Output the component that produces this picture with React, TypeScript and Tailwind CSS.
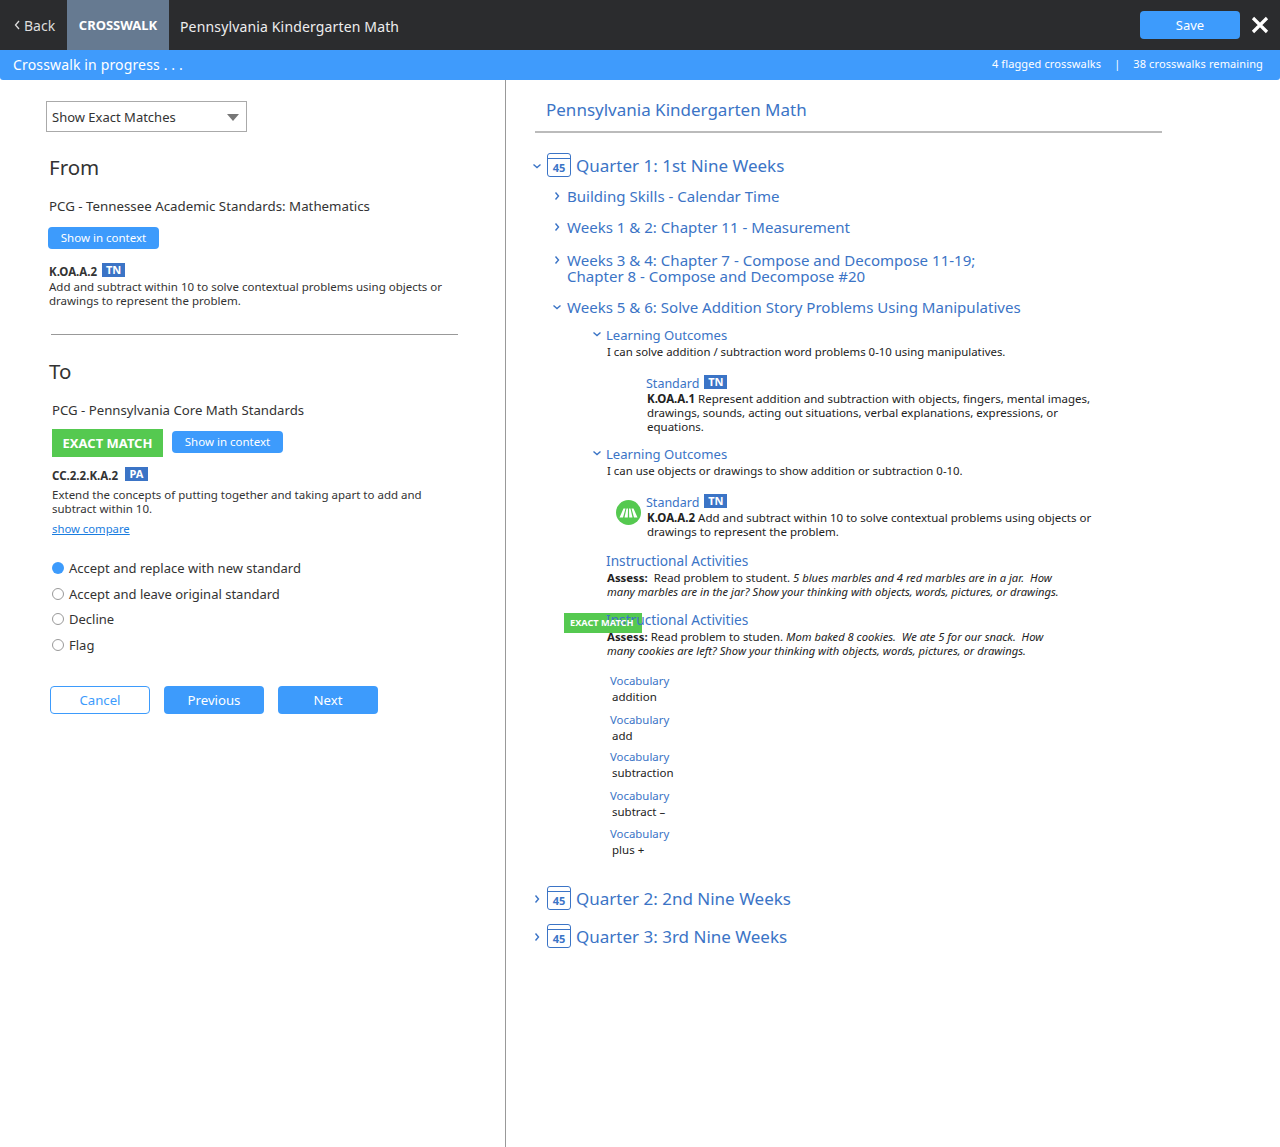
import React from "react";

const font = { fontFamily: '"Noto Sans", sans-serif' };

function Badge({ t, cls = "" }: { t: string; cls?: string }) {
  return (
    <span className={`inline-flex h-[14px] w-[23px] items-center justify-center bg-[#3b74c6] text-[11px] font-bold leading-[14px] text-white ${cls}`}>
      {t}
    </span>
  );
}

function Chevron({ open, cls = "" }: { open?: boolean; cls?: string }) {
  return (
    <svg width="10" height="10" viewBox="0 0 10 10" className={cls} fill="none" stroke="#3b74c6" strokeWidth="1.4">
      {open ? <path d="M1.5 3.5 L5 6.5 L8.5 3.5" /> : <path d="M3.5 1.5 L6.5 5 L3.5 8.5" />}
    </svg>
  );
}

function Cal() {
  return (
    <span className="relative flex h-[24px] w-[24px] shrink-0 items-end justify-center rounded-[3px] border border-[#3b74c6] pb-[1px] text-[11px] font-bold leading-[14px] text-[#3b74c6]">
      <span className="absolute left-0 right-0 top-[4px] h-px bg-[#3b74c6]" />
      45
    </span>
  );
}

function Quarter({ t, open, cls }: { t: string; open?: boolean; cls: string }) {
  return (
    <div className={`flex h-[24px] items-center ${cls}`}>
      <Chevron open={open} cls="ml-[-3px] mr-[5px] mt-[2px]" />
      <Cal />
      <span className="ml-[5px] pt-[2px] text-[17px] leading-[24px] text-[#3b74c6]">{t}</span>
    </div>
  );
}

function Sub({ t, open, cls }: { t: React.ReactNode; open?: boolean; cls: string }) {
  return (
    <div className={`flex items-start pl-[17px] ${cls}`}>
      <Chevron open={open} cls="mt-[3px] mr-[5px] shrink-0" />
      <div className="text-[15.05px] leading-[16px] text-[#3b74c6]">{t}</div>
    </div>
  );
}

function Btn({ t, cls }: { t: string; cls: string }) {
  return <div className={`flex items-center justify-center rounded-[4px] bg-[#3d9bfc] text-white ${cls}`}>{t}</div>;
}

function Radio({ t, on, cls }: { t: string; on?: boolean; cls: string }) {
  return (
    <div className={`flex h-[20px] items-center pl-[52px] text-[13px] text-[#333] ${cls}`}>
      <span className={`mr-[5px] h-[12px] w-[12px] rounded-full ${on ? "bg-[#3d9bfc]" : "border border-[#999] bg-white"}`} />
      <span className="pt-[1px]">{t}</span>
    </div>
  );
}

function Vocab({ t, cls }: { t: string; cls: string }) {
  return (
    <div className={`pl-[75px] ${cls}`}>
      <div className="text-[11.4px] leading-[16px] text-[#3b74c6]">Vocabulary</div>
      <div className="pl-[2px] text-[11.5px] leading-[16px] text-[#222]">{t}</div>
    </div>
  );
}

function Outcome({ t }: { t: string }) {
  return (
    <div className="relative mt-[12px] pl-[57px]">
      <Chevron open cls="absolute left-[57px] top-[2px]" />
      <div className="pl-[14px] text-[13.1px] leading-[16px] text-[#3b74c6]">Learning Outcomes</div>
      <div className="mt-[1px] pl-[15px] text-[11.4px] leading-[16px]">{t}</div>
    </div>
  );
}

export default function App() {
  return (
    <div style={font} className="flex min-h-[1147px] w-[1280px] flex-col bg-white">
      <header className="flex h-[50px] items-center bg-[#2b2c2e] text-white">
        <div className="flex w-[67px] items-center pl-[14px] text-[14px] text-[#ddd]">
          <svg width="6" height="10" viewBox="0 0 6 10" fill="none" stroke="#ddd" strokeWidth="1.3" className="mr-[4px]"><path d="M5 1 L1.5 5 L5 9" /></svg>
          Back
        </div>
        <div className="flex h-[50px] w-[102px] items-center justify-center bg-[#667a91] pt-[1px] text-[13px] font-bold">CROSSWALK</div>
        <div className="ml-[11px] pt-[2px] text-[14px] tracking-[0.15px] text-[#eee]">Pennsylvania Kindergarten Math</div>
        <Btn t="Save" cls="ml-auto h-[28px] w-[100px] pt-[1px] text-[13px]" />
        <svg width="18" height="18" viewBox="0 0 18 18" className="ml-[11px] mr-[11px]" stroke="#fff" strokeWidth="3.2" fill="none"><path d="M2 2 L16 16 M16 2 L2 16" /></svg>
      </header>
      <div className="flex h-[30px] items-center rounded-b-[3px] bg-[#3f9bfc] pl-[13px] pr-[17px] text-white">
        <span className="pb-[1px] text-[14px] tracking-[0.15px]">Crosswalk in progress . . .</span>
        <span className="ml-auto pb-[1px] text-[11px] tracking-[0.12px]">4 flagged crosswalks</span>
        <span className="mx-[13px] pb-[1px] text-[11px]">|</span>
        <span className="pb-[1px] text-[11px] tracking-[0.12px]">38 crosswalks remaining</span>
      </div>
      <main className="flex flex-1">
        <section className="w-[506px] shrink-0 border-r border-[#999] text-[#333]">
          <div className="ml-[46px] mt-[21px] flex h-[31px] w-[201px] items-center border border-[#aaa] pl-[5px] pt-[2px] text-[13px] text-[#333]">
            Show Exact Matches
            <span className="ml-auto mr-[7px] h-0 w-0 border-x-[6px] border-t-[7px] border-x-transparent border-t-[#777]" />
          </div>
          <h2 className="ml-[49px] mt-[20px] text-[20.5px] leading-[30px]">From</h2>
          <p className="ml-[49px] mt-[16px] text-[13.3px] leading-[16px]">PCG - Tennessee Academic Standards: Mathematics</p>
          <Btn t="Show in context" cls="ml-[48px] mt-[13px] h-[22px] w-[111px] text-[11.5px]" />
          <div className="ml-[49px] mt-[14px] flex h-[14px] items-center">
            <span className="mr-[5px] mt-[3px] text-[11.5px] font-bold">K.OA.A.2</span>
            <Badge t="TN" />
          </div>
          <p className="ml-[49px] mt-[3px] w-[410px] text-[11.5px] leading-[14px]">
            Add and subtract within 10 to solve contextual problems using objects or drawings to represent the problem.
          </p>
          <hr className="ml-[51px] mt-[26px] w-[407px] border-[#999]" />
          <h2 className="ml-[49px] mt-[21px] text-[20.5px] leading-[30px]">To</h2>
          <p className="ml-[52px] mt-[16px] text-[13.2px] leading-[16px]">PCG - Pennsylvania Core Math Standards</p>
          <div className="ml-[52px] mt-[11px] flex h-[28px] items-center">
            <div className="flex h-[28px] w-[111px] items-center justify-center bg-[#55c950] pt-[1px] text-[13px] font-bold text-white">EXACT MATCH</div>
            <Btn t="Show in context" cls="mb-[2px] ml-[9px] h-[22px] w-[111px] text-[11.5px]" />
          </div>
          <div className="ml-[52px] mt-[10px] flex h-[14px] items-center">
            <span className="mr-[7px] mt-[3px] text-[11.5px] font-bold">CC.2.2.K.A.2</span>
            <Badge t="PA" />
          </div>
          <p className="ml-[52px] mt-[7px] w-[400px] text-[11.5px] leading-[14px]">
            Extend the concepts of putting together and taking apart to add and subtract within 10.
          </p>
          <a className="ml-[52px] mt-[6px] block text-[11.3px] leading-[14px] text-[#1a7de0] underline">show compare</a>
          <Radio t="Accept and replace with new standard" on cls="mt-[22px]" />
          <Radio t="Accept and leave original standard" cls="mt-[6px]" />
          <Radio t="Decline" cls="mt-[5px]" />
          <Radio t="Flag" cls="mt-[6px]" />
          <div className="ml-[50px] mt-[31px] flex gap-[14px] text-[13.2px]">
            <div className="flex h-[28px] w-[100px] items-center justify-center rounded-[4px] border border-[#3d9bfc] pt-[1px] text-[#3d9bfc]">Cancel</div>
            <Btn t="Previous" cls="h-[28px] w-[100px] pt-[1px]" />
            <Btn t="Next" cls="h-[28px] w-[100px] pt-[1px]" />
          </div>
        </section>
        <section className="flex-1 pl-[29px] text-[#222]">
          <div className="w-[627px] border-b-2 border-[#bbb] pb-[9px] pl-[11px] pt-[18px] text-[17px] leading-[24px] text-[#3b74c6]">Pennsylvania Kindergarten Math</div>
          <Quarter t="Quarter 1: 1st Nine Weeks" open cls="mt-[20px]" />
          <Sub t="Building Skills - Calendar Time" cls="mt-[11px]" />
          <Sub t="Weeks 1 & 2: Chapter 11 - Measurement" cls="mt-[15px]" />
          <Sub t={<>Weeks 3 &amp; 4: Chapter 7 - Compose and Decompose 11-19;<br />Chapter 8 - Compose and Decompose #20</>} cls="mt-[17px]" />
          <Sub t="Weeks 5 & 6: Solve Addition Story Problems Using Manipulatives" open cls="mt-[15px]" />

          <Outcome t="I can solve addition / subtraction word problems 0-10 using manipulatives." />
          <div className="ml-[111px] mt-[16px] flex h-[16px] items-end">
            <span className="text-[12.5px] leading-[16px] text-[#3b74c6]">Standard</span>
            <Badge t="TN" cls="mb-[3px] ml-[5px]" />
          </div>
          <p className="ml-[112px] w-[455px] text-[11.5px] leading-[14px]"><b>K.OA.A.1</b> Represent addition and subtraction with objects, fingers, mental images, drawings, sounds, acting out situations, verbal explanations, expressions, or equations.</p>

          <Outcome t="I can use objects or drawings to show addition or subtraction 0-10." />
          <div className="relative mt-[16px]">
            <div className="absolute left-[81px] top-[5px] flex h-[25px] w-[25px] items-center justify-center rounded-full bg-[#55c950]">
              <svg width="19" height="10" viewBox="0 0 19 10" fill="#fff"><path d="M0.5 9.5 L4.5 0.5 H6.5 L4 9.5Z M5.5 9.5 L7.5 0.5 H9 L8.8 9.5Z M10.2 9.5 L10 0.5 H11.5 L13.5 9.5Z M15 9.5 L12.5 0.5 H14.5 L18.5 9.5Z" /></svg>
            </div>
            <div className="ml-[111px] flex h-[16px] items-end">
              <span className="text-[12.5px] leading-[16px] text-[#3b74c6]">Standard</span>
              <Badge t="TN" cls="mb-[3px] ml-[5px]" />
            </div>
            <p className="ml-[112px] w-[455px] text-[11.5px] leading-[14px]"><b>K.OA.A.2</b> Add and subtract within 10 to solve contextual problems using objects or drawings to represent the problem.</p>
          </div>

          <div className="ml-[71px] mt-[14px] text-[13.7px] leading-[16px] text-[#3b74c6]">Instructional Activities</div>
          <p className="ml-[72px] mt-[2px] w-[470px] text-[11.4px] leading-[14px]"><b>Assess:</b>&nbsp; Read problem to student. <i className="text-[11.2px]">5 blues marbles and 4 red marbles are in a jar.&nbsp; How many marbles are in the jar? Show your thinking with objects, words, pictures, or drawings.</i></p>

          <div className="relative mt-[13px]">
            <div className="absolute left-[29px] top-[1px] h-[20px] w-[78px] bg-[#55c950]" />
            <div className="relative ml-[71px] text-[13.7px] leading-[16px] text-[#3b74c6]">Instructional Activities</div>
            <div className="absolute left-[35px] top-[1px] flex h-[20px] items-center text-[9.2px] font-bold text-white">EXACT MATCH</div>
            <p className="relative ml-[72px] mt-[2px] w-[450px] text-[11.4px] leading-[14px]"><b>Assess:</b> Read problem to studen. <i className="text-[11.2px]">Mom baked 8 cookies.&nbsp; We ate 5 for our snack.&nbsp; How many cookies are left? Show your thinking with objects, words, pictures, or drawings.</i></p>
          </div>

          <Vocab t="addition" cls="mt-[15px]" />
          <Vocab t="add" cls="mt-[7px]" />
          <Vocab t="subtraction" cls="mt-[5px]" />
          <Vocab t="subtract –" cls="mt-[7px]" />
          <Vocab t="plus +" cls="mt-[6px]" />

          <Quarter t="Quarter 2: 2nd Nine Weeks" cls="mt-[28px]" />
          <Quarter t="Quarter 3: 3rd Nine Weeks" cls="mt-[14px]" />
        </section>
      </main>
    </div>
  );
}
